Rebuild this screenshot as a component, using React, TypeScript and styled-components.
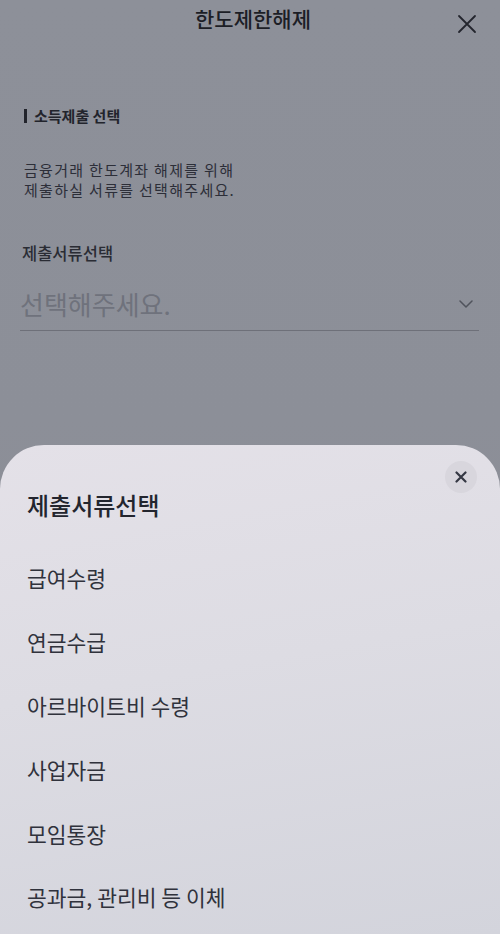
import React from "react";
import styled, { createGlobalStyle } from "styled-components";

const Global = createGlobalStyle`
  html, body { margin: 0; padding: 0; }
  body { font-family: "Noto Sans CJK KR", "Noto Sans", sans-serif; }
  * { box-sizing: border-box; }
`;

const Page = styled.div`
  width: 500px;
  height: 934px;
  display: flex;
  flex-direction: column;
  overflow: hidden;
  background: linear-gradient(180deg, #8d9099 0%, #8c8f98 45%, #8e8a92 100%);
`;

const Header = styled.header`
  display: grid;
  grid-template-columns: 1fr auto 1fr;
  align-items: start;
  height: 48px;
`;

const Title = styled.h1`
  grid-column: 2;
  margin: 0;
  padding: 5px 0 0 6px;
  font-size: 21px;
  line-height: 26px;
  font-weight: 500;
  color: #1c1e26;
`;

const CloseButton = styled.button`
  grid-column: 3;
  justify-self: end;
  margin: 14px 23px 0 0;
  width: 20px;
  height: 20px;
  padding: 0;
  border: 0;
  background: none;
  display: flex;
  align-items: center;
  justify-content: center;
`;

const Content = styled.main`
  display: flex;
  flex-direction: column;
  padding: 0 21px 0 20px;
`;

const SectionLabel = styled.div`
  margin: 58px 0 0 4px;
  display: flex;
  align-items: center;
  gap: 7px;
  font-size: 15px;
  line-height: 20px;
  font-weight: 700;
  color: #22242c;
  &::before {
    content: "";
    width: 3px;
    height: 14px;
    background: #22242c;
  }
`;

const Description = styled.p`
  margin: 34px 0 0 4px;
  font-size: 15px;
  line-height: 20px;
  letter-spacing: 1.3px;
  color: #2c2e38;
`;

const FieldLabel = styled.div`
  margin: 43px 0 0 2px;
  font-size: 16.5px;
  line-height: 20px;
  font-weight: 500;
  color: #2a2c34;
`;

const SelectRow = styled.div`
  margin-top: 24px;
  display: flex;
  align-items: center;
  justify-content: space-between;
  padding: 0 6px 9px 0;
  border-bottom: 1.5px solid #6e7079;
`;

const Placeholder = styled.span`
  font-size: 26px;
  line-height: 34px;
  color: #6f727c;
`;

const Sheet = styled.section`
  margin-top: auto;
  height: 489px;
  position: relative;
  border-radius: 44px 44px 0 0;
  background: linear-gradient(170deg, #e4e1e8 0%, #dddce3 45%, #d3d4dc 100%);
  padding-top: 44px;
  display: flex;
  flex-direction: column;
`;

const SheetClose = styled.button`
  position: absolute;
  top: 16px;
  right: 23px;
  width: 32px;
  height: 32px;
  border-radius: 50%;
  border: 0;
  padding: 0;
  background: #d8d6dd;
  display: flex;
  align-items: center;
  justify-content: center;
`;

const SheetTitle = styled.h2`
  margin: 0 0 25px;
  padding-left: 27px;
  font-size: 24px;
  line-height: 32px;
  font-weight: 500;
  color: #23252e;
`;

const OptionList = styled.ul`
  list-style: none;
  margin: 0;
  padding: 0;
`;

const Option = styled.li`
  height: 63.8px;
  display: flex;
  align-items: center;
  padding-left: 27px;
  font-size: 21.5px;
  color: #30323c;
`;

const options = [
  "급여수령",
  "연금수급",
  "아르바이트비 수령",
  "사업자금",
  "모임통장",
  "공과금, 관리비 등 이체",
];

export default function App() {
  return (
    <Page>
      <Global />
      <Header>
        <Title>한도제한해제</Title>
        <CloseButton aria-label="닫기">
          <svg width="20" height="20" viewBox="0 0 20 20">
            <path d="M2 2L18 18M18 2L2 18" stroke="#23252d" strokeWidth="1.8" strokeLinecap="round" />
          </svg>
        </CloseButton>
      </Header>
      <Content>
        <SectionLabel>소득제출 선택</SectionLabel>
        <Description>
          금융거래 한도계좌 해제를 위해
          <br />
          제출하실 서류를 선택해주세요.
        </Description>
        <FieldLabel>제출서류선택</FieldLabel>
        <SelectRow>
          <Placeholder>선택해주세요.</Placeholder>
          <svg width="14" height="8" viewBox="0 0 14 8">
            <path d="M1 1L7 7L13 1" fill="none" stroke="#50535c" strokeWidth="1.5" strokeLinecap="round" strokeLinejoin="round" />
          </svg>
        </SelectRow>
      </Content>
      <Sheet>
        <SheetClose aria-label="닫기">
          <svg width="12" height="12" viewBox="0 0 12 12">
            <path d="M1.5 1.5L10.5 10.5M10.5 1.5L1.5 10.5" stroke="#353844" strokeWidth="2.2" strokeLinecap="round" />
          </svg>
        </SheetClose>
        <SheetTitle>제출서류선택</SheetTitle>
        <OptionList>
          {options.map((o) => (
            <Option key={o}>{o}</Option>
          ))}
        </OptionList>
      </Sheet>
    </Page>
  );
}
